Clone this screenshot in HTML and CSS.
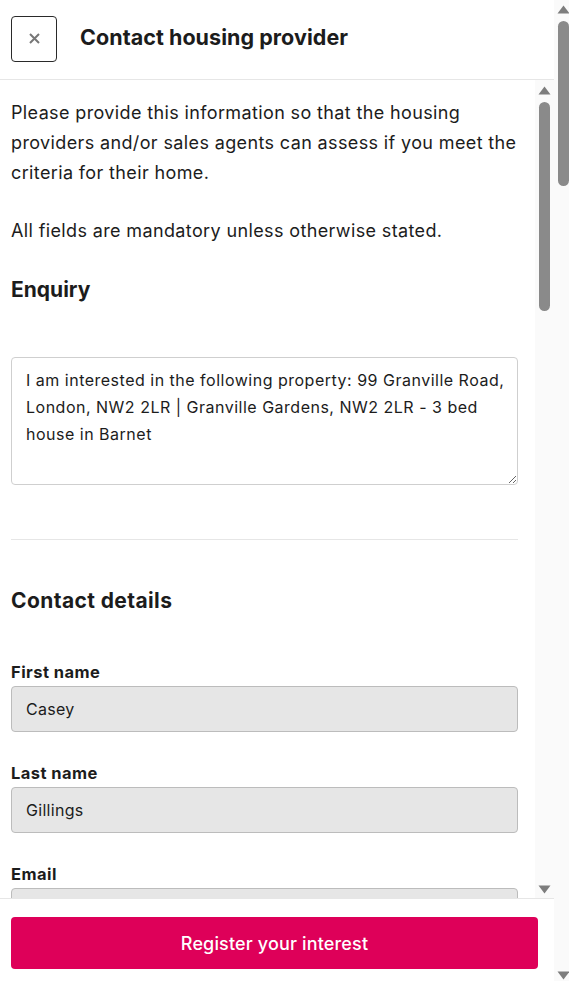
FILE: index.html
```html
<!DOCTYPE html>
<html lang="en">
<head>
<meta charset="utf-8">
<title>Contact housing provider</title>
<link rel="stylesheet" href="styles.css">
</head>
<body>
<div class="window">
  <div class="panel">
    <header class="panel-head">
      <button class="close-btn" type="button" aria-label="Close">
        <svg width="11" height="11" viewBox="0 0 11 11"><path d="M1 1L10 10M10 1L1 10" stroke="#777" stroke-width="2" fill="none"/></svg>
      </button>
      <h1 class="panel-title">Contact housing provider</h1>
    </header>
    <div class="panel-body">
      <div class="scroll-content">
        <p class="intro">Please provide this information so that the housing providers and/or sales agents can assess if you meet the criteria for their home.</p>
        <p class="intro intro-second">All fields are mandatory unless otherwise stated.</p>
        <h2 class="section-title enquiry-title">Enquiry</h2>
        <textarea class="enquiry-box">I am interested in the following property: 99 Granville Road, London, NW2 2LR | Granville Gardens, NW2 2LR - 3 bed house in Barnet</textarea>
        <hr class="divider">
        <h2 class="section-title contact-title">Contact details</h2>
        <div class="field first-field">
          <label class="field-label">First name</label>
          <div class="field-input">Casey</div>
        </div>
        <div class="field">
          <label class="field-label">Last name</label>
          <div class="field-input">Gillings</div>
        </div>
        <div class="field">
          <label class="field-label">Email</label>
          <div class="field-input"></div>
        </div>
      </div>
      <div class="sb sb-inner">
        <svg class="sb-arrow" width="13" height="9" viewBox="0 0 13 9"><path d="M6.5 0.5L12.5 8.5H0.5Z" fill="#7d7d7d"/></svg>
        <div class="sb-thumb thumb-inner"></div>
        <svg class="sb-arrow sb-down" width="13" height="9" viewBox="0 0 13 9"><path d="M0.5 0.5H12.5L6.5 8.5Z" fill="#7d7d7d"/></svg>
      </div>
    </div>
    <footer class="panel-foot">
      <button class="primary-btn" type="button">Register your interest</button>
    </footer>
  </div>
  <div class="outer-bar">
    <div class="sb sb-outer">
      <svg class="sb-arrow" width="13" height="9" viewBox="0 0 13 9"><path d="M6.5 0.5L12.5 8.5H0.5Z" fill="#7d7d7d"/></svg>
      <div class="sb-thumb thumb-outer"></div>
      <svg class="sb-arrow sb-down" width="13" height="9" viewBox="0 0 13 9"><path d="M0.5 0.5H12.5L6.5 8.5Z" fill="#7d7d7d"/></svg>
    </div>
  </div>
</div>
</body>
</html>
```
FILE: styles.css
```css
* { box-sizing: border-box; }
html, body { margin: 0; padding: 0; }
body {
  font-family: Inter, "Noto Sans", sans-serif;
  color: #1c1c1c;
  background: #fff;
  overflow: hidden;
}
.window {
  display: flex;
  height: 981px;
  width: 569px;
}
.panel {
  flex: 1;
  display: flex;
  flex-direction: column;
  min-width: 0;
}
.panel-head {
  flex: 0 0 80px;
  display: flex;
  align-items: center;
  padding: 0 11px;
  border-bottom: 1px solid #e6e6e6;
}
.close-btn {
  width: 46px;
  height: 46px;
  border: 1px solid #2a2a2a;
  border-radius: 4px;
  background: #fff;
  display: flex;
  align-items: center;
  justify-content: center;
  padding: 0;
  margin-top: -2px;
  flex: 0 0 auto;
}
.panel-title {
  margin: -6px 0 0 23px;
  font-size: 21.5px;
  font-weight: 700;
  line-height: 28px;
  letter-spacing: 0.05px;
}
.panel-body {
  flex: 1;
  display: flex;
  min-height: 0;
}
.scroll-content {
  flex: 1;
  overflow: hidden;
  padding: 18px 17px 0 11px;
}
.intro {
  margin: 0;
  font-size: 18px;
  line-height: 30px;
  letter-spacing: 0.37px;
}
.intro-second { margin-top: 28px; }
.section-title {
  margin: 0;
  font-size: 21px;
  line-height: 28px;
  font-weight: 700;
}
.enquiry-title { margin-top: 30px; }
.enquiry-box {
  display: block;
  width: 100%;
  height: 128px;
  margin-top: 53px;
  padding: 9px 8px 9px 14px;
  border: 1px solid #cfcfcf;
  border-radius: 4px;
  font-family: Inter, "Noto Sans", sans-serif;
  font-size: 16px;
  line-height: 27px;
  letter-spacing: 0.5px;
  color: #1c1c1c;
  resize: vertical;
}
.divider {
  margin: 54px 0 0;
  border: 0;
  border-top: 1px solid #e6e6e6;
}
.contact-title { margin-top: 47px; letter-spacing: 0.4px; }
.field { margin-top: 29px; }
.first-field { margin-top: 45px; }
.field-label {
  display: block;
  font-size: 16.5px;
  font-weight: 700;
  line-height: 24px;
  letter-spacing: 0.45px;
  margin-bottom: 2px;
}
.field-input {
  height: 46px;
  display: flex;
  align-items: center;
  padding: 0 14px;
  background: #e6e6e6;
  border: 1px solid #bcbcbc;
  border-radius: 4px;
  font-size: 16px;
  letter-spacing: 0.3px;
}
.panel-foot {
  flex: 0 0 83px;
  border-top: 1px solid #e6e6e6;
  padding: 18px 16px 0 11px;
}
.primary-btn {
  width: 100%;
  height: 52px;
  border: 0;
  border-radius: 4px;
  background: #de0059;
  color: #fff;
  font-family: Inter, "Noto Sans", sans-serif;
  font-size: 18px;
  font-weight: 500;
  letter-spacing: 0.15px;
}
.sb {
  display: flex;
  flex-direction: column;
  align-items: flex-start;
  width: 19px;
  flex: 0 0 19px;
  background: #fafafa;
}
.sb-arrow { margin-left: 3px; flex: 0 0 auto; }
.sb-thumb {
  margin-left: 4px;
  width: 11px;
  border-radius: 6px;
  background: #8a8a8a;
}
.sb-down { margin-top: auto; }
.sb-inner { padding: 6px 0 4px; }
.thumb-inner { margin-top: 7px; height: 209px; }
.outer-bar {
  flex: 0 0 15px;
  overflow: hidden;
  display: flex;
}
.sb-outer { padding: 5px 0 1px; height: 981px; }
.thumb-outer { margin-top: 7px; height: 165px; }
```
